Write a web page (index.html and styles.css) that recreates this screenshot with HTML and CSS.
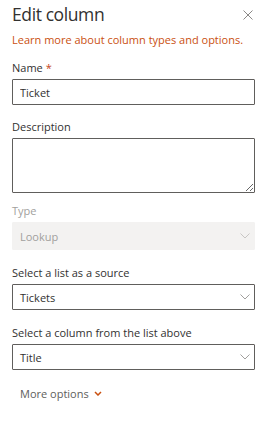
FILE: index.html
```html
<!DOCTYPE html>
<html lang="en">
<head>
    <meta charset="UTF-8">
    <meta name="viewport" content="width=device-width, initial-scale=1.0">
    <title>Edit column</title>
    <link rel="stylesheet" href="styles.css">
</head>
<body>
    <div class="panel">
        <div class="header">
            <h1>Edit column</h1>
            <button class="close" aria-label="Close">
                <svg width="10" height="10" viewBox="0 0 10 10"><path d="M0.5 0.5L9.5 9.5M9.5 0.5L0.5 9.5" stroke="#8a8886" stroke-width="1" fill="none"/></svg>
            </button>
        </div>
        <a class="learn" href="#">Learn more about column types and options.</a>

        <div class="field">
            <label>Name <span class="req">*</span></label>
            <input type="text" class="box" value="Ticket">
        </div>

        <div class="field tight">
            <label>Description</label>
            <textarea class="box area"></textarea>
        </div>

        <div class="field wide">
            <label class="disabled">Type</label>
            <div class="select off">
                <span>Lookup</span>
                <svg width="10" height="6" viewBox="0 0 10 6"><path d="M0.5 0.5L5 5L9.5 0.5" stroke="#c8c6c4" fill="none"/></svg>
            </div>
        </div>

        <div class="field wide">
            <label>Select a list as a source</label>
            <div class="select">
                <span>Tickets</span>
                <svg width="10" height="6" viewBox="0 0 10 6"><path d="M0.5 0.5L5 5L9.5 0.5" stroke="#a19f9d" fill="none"/></svg>
            </div>
        </div>

        <div class="field">
            <label>Select a column from the list above</label>
            <div class="select">
                <span>Title</span>
                <svg width="10" height="6" viewBox="0 0 10 6"><path d="M0.5 0.5L5 5L9.5 0.5" stroke="#a19f9d" fill="none"/></svg>
            </div>
        </div>

        <button class="more">More options
            <svg width="8" height="5" viewBox="0 0 8 5"><path d="M1 1L4 4L7 1" stroke="#ca5010" stroke-width="1.5" fill="none"/></svg>
        </button>
    </div>
</body>
</html>
```

FILE: styles.css
```css
body {
    margin: 0;
    font-family: "Segoe UI", "Open Sans", sans-serif;
    color: #323130;
    background: #fff;
}
.panel {
    padding: 0 13px 0 12px;
    display: flex;
    flex-direction: column;
}
.header {
    display: flex;
    justify-content: space-between;
    align-items: center;
    height: 28px;
}
h1 {
    margin: 0;
    font-size: 17.5px;
    font-weight: 400;
    letter-spacing: -0.4px;
    line-height: 26px;
}
.close {
    border: none;
    background: none;
    padding: 0;
    margin: 2px 2px 0 0;
    display: flex;
}
.learn {
    color: #ca5010;
    text-decoration: none;
    font-size: 11px;
    line-height: 16px;
    margin-top: 4px;
    margin-bottom: 12px;
}
.field {
    display: flex;
    flex-direction: column;
    margin-bottom: 14px;
}
.field.tight {
    margin-bottom: 10px;
}
.field.wide {
    margin-bottom: 15px;
}
label {
    font-size: 11px;
    font-weight: 500;
    line-height: 16px;
    margin-bottom: 3px;
}
label.disabled {
    color: #a19f9d;
}
.req {
    color: #c4441c;
}
.box {
    box-sizing: border-box;
    height: 26px;
    border: 1px solid #605e5c;
    border-radius: 1px;
    padding: 0 7px;
    font-family: inherit;
    font-size: 11px;
    color: #323130;
    margin: 0;
}
.area {
    height: 55px;
    resize: both;
}
.select {
    box-sizing: border-box;
    height: 26px;
    border: 1px solid #605e5c;
    border-radius: 1px;
    padding: 0 4px 0 7px;
    display: flex;
    justify-content: space-between;
    align-items: center;
    font-size: 11px;
}
.select.off {
    border-color: #f3f2f1;
    background: #f3f2f1;
    color: #a19f9d;
    height: 28px;
}
.more {
    align-self: flex-start;
    border: none;
    background: none;
    font-family: inherit;
    font-size: 11px;
    color: #605e5c;
    padding: 0 8px;
    margin-top: 2px;
    display: flex;
    align-items: center;
    gap: 5px;
}
```
